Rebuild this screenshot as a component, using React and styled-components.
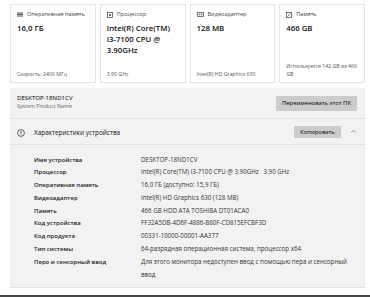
import React from 'react';
import styled, { createGlobalStyle } from 'styled-components';

const Global = createGlobalStyle`
  html, body { margin: 0; padding: 0; background: #ffffff; }
  body { font-family: "Open Sans", "Noto Sans", sans-serif; color: #1a1a1a; }
  * { box-sizing: border-box; }
`;

const Shell = styled.div`
  width: 370px;
  height: 297px;
  overflow: hidden;
  display: flex;
  flex-direction: column;
`;

const Page = styled.div`
  padding: 4px 5px 0 10px;
  display: flex;
  flex-direction: column;
`;

const Cards = styled.div`
  display: grid;
  grid-template-columns: repeat(4, 1fr);
  gap: 4px;
  height: 79px;
`;

const Card = styled.div`
  background: #ffffff;
  border: 1px solid #e4e4e4;
  padding: 6px 3px 4px 6px;
  display: flex;
  flex-direction: column;
  min-width: 0;
`;

const CardLabel = styled.div`
  display: flex;
  align-items: center;
  gap: 4px;
  font-size: 5.6px;
  line-height: 7px;
  color: #444;
  white-space: nowrap;
`;

const CardValue = styled.div`
  margin-top: 4.5px;
  padding-right: 3px;
  font-size: 7.8px;
  font-weight: 600;
  line-height: 11px;
  color: #111;
`;

const CardFoot = styled.div`
  margin-top: auto;
  font-size: 5.2px;
  line-height: 8px;
  color: #555;
`;

const Section = styled.div`
  background: #f2f2f2;
  display: flex;
  align-items: center;
  justify-content: space-between;
  padding: 0 8px 0 7px;
  height: ${p => p.$h}px;
  margin-top: ${p => p.$mt || 0}px;
  border-bottom: 1px solid #e2e2e2;
`;

const NameBlock = styled.div`
  display: flex;
  flex-direction: column;
  align-self: flex-start;
  padding-top: 5px;
`;

const PcName = styled.div`
  font-size: 6.1px;
  line-height: 9px;
  color: #000;
`;

const PcSub = styled.div`
  font-size: 5.3px;
  line-height: 8px;
  color: #666;
`;

const Btn = styled.div`
  background: #cccccc;
  color: #000;
  font-size: 5.9px;
  height: ${p => p.$h}px;
  width: ${p => p.$w}px;
  display: flex;
  align-items: center;
  justify-content: center;
  white-space: nowrap;
`;

const HeadLeft = styled.div`
  display: flex;
  align-items: center;
  gap: 9px;
  font-size: 6.4px;
  color: #111;
  padding-top: 2px;
`;

const HeadRight = styled.div`
  display: flex;
  align-items: center;
  gap: 9px;
`;

const Specs = styled.div`
  background: #f2f2f2;
  display: grid;
  grid-template-columns: 107px 1fr;
  padding: 8.5px 14px 6px 24px;
  line-height: 12.8px;
  border-bottom: 1px solid #e2e2e2;
`;

const SpecKey = styled.div`
  font-size: 6px;
  font-weight: 600;
  color: #1a1a1a;
`;

const SpecVal = styled.div`
  font-size: 6.2px;
  color: #333;
  white-space: pre-wrap;
`;

const DarkBar = styled.div`
  margin-top: auto;
  height: 2px;
  background: #474747;
`;

const RamIcon = () => (
  <svg width="6" height="5" viewBox="0 0 6 5">
    <rect x="0" y="0.5" width="6" height="1" fill="#555" />
    <rect x="0" y="2" width="6" height="1" fill="#555" />
    <rect x="0" y="3.5" width="6" height="1" fill="#555" />
  </svg>
);

const CpuIcon = () => (
  <svg width="6" height="6" viewBox="0 0 6 6">
    <rect x="0.5" y="0.5" width="5" height="5" fill="none" stroke="#555" strokeWidth="0.8" />
    <rect x="2" y="2" width="2" height="2" fill="#777" />
  </svg>
);

const GpuIcon = () => (
  <svg width="7" height="5" viewBox="0 0 7 5">
    <rect x="0.5" y="0.5" width="6" height="4" fill="none" stroke="#555" strokeWidth="0.8" />
    <rect x="1.8" y="1.8" width="1.5" height="1.5" fill="#666" />
    <rect x="4" y="1.8" width="1.5" height="1.5" fill="#666" />
  </svg>
);

const DiskIcon = () => (
  <svg width="6" height="6" viewBox="0 0 6 6">
    <rect x="0.5" y="0.5" width="5" height="5" fill="none" stroke="#555" strokeWidth="0.8" />
    <line x1="1.5" y1="4.5" x2="4.5" y2="1.5" stroke="#555" strokeWidth="0.8" />
  </svg>
);

const InfoIcon = () => (
  <svg width="8" height="8" viewBox="0 0 8 8">
    <circle cx="4" cy="4" r="3.4" fill="none" stroke="#222" strokeWidth="0.7" />
    <line x1="4" y1="2" x2="4" y2="4.6" stroke="#222" strokeWidth="0.8" />
    <circle cx="4" cy="5.8" r="0.45" fill="#222" />
  </svg>
);

const ChevronUp = () => (
  <svg width="7" height="5" viewBox="0 0 7 5">
    <polyline points="1,3.8 3.5,1.3 6,3.8" fill="none" stroke="#777" strokeWidth="0.7" />
  </svg>
);

const cards = [
  { icon: <RamIcon />, label: 'Оперативная память', value: '16,0 ГБ', foot: 'Скорость: 2400 МГц' },
  { icon: <CpuIcon />, label: 'Процессор', value: 'Intel(R) Core(TM) i3-7100 CPU @ 3.90GHz', foot: '3.90 GHz' },
  { icon: <GpuIcon />, label: 'Видеоадаптер', value: '128 MB', foot: 'Intel(R) HD Graphics 630' },
  { icon: <DiskIcon />, label: 'Память', value: '466 GB', foot: 'Используется 142 GB из 466 GB' },
];

const specs = [
  ['Имя устройства', 'DESKTOP-18ND1CV'],
  ['Процессор', 'Intel(R) Core(TM) i3-7100 CPU @ 3.90GHz   3.90 GHz'],
  ['Оперативная память', '16,0 ГБ (доступно: 15,9 ГБ)'],
  ['Видеоадаптер', 'Intel(R) HD Graphics 630 (128 MB)'],
  ['Память', '466 GB HDD ATA TOSHIBA DT01ACA0'],
  ['Код устройства', 'FF32A5DB-4D6F-4886-B80F-CD815EFCBF3D'],
  ['Код продукта', '00331-10000-00001-AA377'],
  ['Тип системы', '64-разрядная операционная система, процессор x64'],
  ['Перо и сенсорный ввод', 'Для этого монитора недоступен ввод с помощью пера и сенсорный ввод'],
];

export default function App() {
  return (
    <Shell>
      <Global />
      <Page>
        <Cards>
          {cards.map(c => (
            <Card key={c.label}>
              <CardLabel>{c.icon}<span>{c.label}</span></CardLabel>
              <CardValue>{c.value}</CardValue>
              <CardFoot>{c.foot}</CardFoot>
            </Card>
          ))}
        </Cards>
        <Section $h={31} $mt={5}>
          <NameBlock>
            <PcName>DESKTOP-18ND1CV</PcName>
            <PcSub>System Product Name</PcSub>
          </NameBlock>
          <Btn $w={81} $h={15}>Переименовать этот ПК</Btn>
        </Section>
        <Section $h={26}>
          <HeadLeft><InfoIcon /><span>Характеристики устройства</span></HeadLeft>
          <HeadRight>
            <Btn $w={47} $h={12}>Копировать</Btn>
            <ChevronUp />
          </HeadRight>
        </Section>
        <Specs>
          {specs.map(([k, v]) => (
            <React.Fragment key={k}>
              <SpecKey>{k}</SpecKey>
              <SpecVal>{v}</SpecVal>
            </React.Fragment>
          ))}
        </Specs>
      </Page>
      <DarkBar />
    </Shell>
  );
}
